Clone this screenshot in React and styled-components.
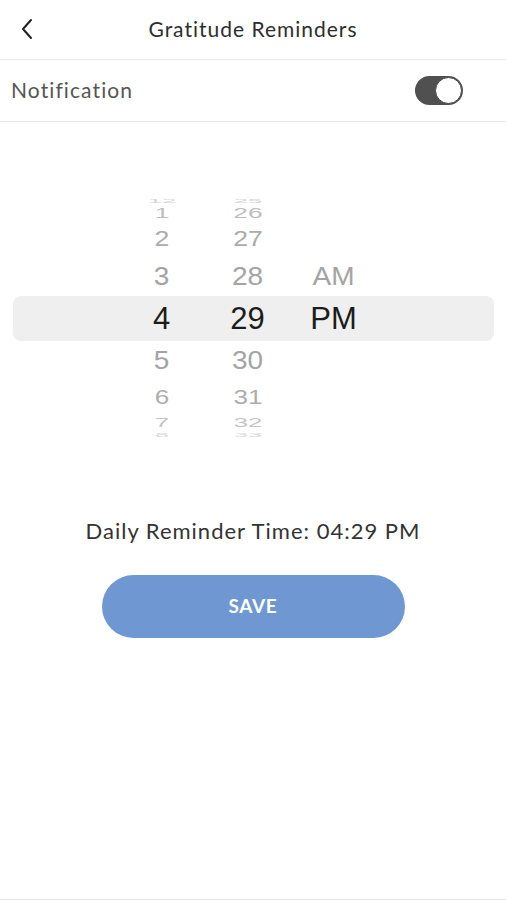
import React from "react"
import styled, { createGlobalStyle } from "styled-components"

const GlobalStyle = createGlobalStyle`
  html, body {
    margin: 0;
    padding: 0;
    background: #fff;
    -webkit-font-smoothing: antialiased;
  }
`

const Screen = styled.div`
  display: flex;
  flex-direction: column;
  height: 900px;
  box-sizing: border-box;
  border-bottom: 1px solid #e6e6e6;
  font-family: Lato, "Noto Sans", sans-serif;
`

const Header = styled.header`
  position: relative;
  display: flex;
  align-items: center;
  justify-content: center;
  height: 59px;
  border-bottom: 1px solid #e8e8e8;
`

const BackButton = styled.button`
  position: absolute;
  left: 13px;
  top: 14px;
  display: flex;
  align-items: center;
  justify-content: center;
  width: 28px;
  height: 30px;
  padding: 0;
  border: none;
  background: none;
`

const Title = styled.h1`
  margin: 0 0 2px;
  font-size: 21px;
  font-weight: 400;
  color: #2e2e2e;
  letter-spacing: 1px;
`

const SettingRow = styled.div`
  display: flex;
  align-items: center;
  justify-content: space-between;
  height: 61px;
  padding: 0 43px 0 11px;
  border-bottom: 1px solid #e8e8e8;
`

const SettingLabel = styled.span`
  margin-bottom: 3px;
  font-size: 21px;
  color: #555;
  letter-spacing: 1.1px;
`

const Toggle = styled.div`
  display: flex;
  align-items: center;
  justify-content: ${(p) => (p.$on ? "flex-end" : "flex-start")};
  width: 48px;
  height: 29px;
  box-sizing: border-box;
  padding: 1px;
  border-radius: 15px;
  background: ${(p) => (p.$on ? "#505050" : "#ddd")};
`

const Knob = styled.div`
  width: 27px;
  height: 27px;
  box-sizing: border-box;
  border-radius: 50%;
  background: #fff;
  border: 1.5px solid #444;
`

const Picker = styled.div`
  display: flex;
  flex-direction: column;
  margin: 74px 0 0;
  font-family: "Liberation Sans", Arial, sans-serif;
`

const WheelRow = styled.div`
  display: grid;
  grid-template-columns: 86px 86px 86px;
  grid-template-rows: ${(p) => p.$h}px;
  justify-content: center;
  padding-right: 12px;
  height: ${(p) => p.$h}px;
  margin: 0 12px 0 13px;
  border-radius: 8px;
  background: ${(p) => (p.$selected ? "#efefef" : "transparent")};
`

const Cell = styled.div`
  display: flex;
  align-items: center;
  justify-content: center;
  height: 100%;
  min-height: 0;
  font-size: ${(p) => (p.$selected ? 31 : 28)}px;
  color: ${(p) => p.$color};
  transform: scale(${(p) => p.$sx}, ${(p) => p.$sy});
  line-height: 1;
  white-space: nowrap;
`

const Summary = styled.p`
  margin: 77px 0 0;
  text-align: center;
  font-size: 22px;
  line-height: 30px;
  color: #333;
  letter-spacing: 1px;
`

const SaveButton = styled.button`
  align-self: center;
  width: 303px;
  height: 63px;
  margin-top: 29px;
  padding-bottom: 3px;
  border: none;
  border-radius: 32px;
  background: #6f98d3;
  color: #fff;
  font-family: Lato, "Noto Sans", sans-serif;
  font-size: 19px;
  font-weight: 700;
  letter-spacing: 0.6px;
`

const rows = [
  { h: 10, cells: ["12", "25", ""], sx: 0.92, sy: 0.2, color: "#d4d4d4" },
  { h: 15, cells: ["1", "26", ""], sx: 0.94, sy: 0.5, color: "#bdbdbd" },
  { h: 36, cells: ["2", "27", ""], sx: 0.95, sy: 0.8, color: "#ababab" },
  { h: 39, cells: ["3", "28", "AM"], sx: 1, sy: 0.93, color: "#a4a4a4" },
  { h: 45, cells: ["4", "29", "PM"], sx: 1, sy: 1, color: "#1c1c1c", selected: true },
  { h: 39, cells: ["5", "30", ""], sx: 1, sy: 0.9, color: "#a4a4a4" },
  { h: 34, cells: ["6", "31", ""], sx: 0.93, sy: 0.75, color: "#adadad" },
  { h: 18, cells: ["7", "32", ""], sx: 0.92, sy: 0.48, color: "#c4c4c4" },
  { h: 7, cells: ["8", "33", ""], sx: 0.9, sy: 0.18, color: "#dadada" },
]

export default function App() {
  return (
    <>
      <GlobalStyle />
      <Screen>
        <Header>
          <BackButton aria-label="Back">
            <svg width="14" height="22" viewBox="0 0 14 22" fill="none">
              <path
                d="M11 2 L3 11 L11 20"
                stroke="#222"
                strokeWidth="2"
                strokeLinecap="round"
                strokeLinejoin="round"
              />
            </svg>
          </BackButton>
          <Title>Gratitude Reminders</Title>
        </Header>
        <SettingRow>
          <SettingLabel>Notification</SettingLabel>
          <Toggle $on>
            <Knob />
          </Toggle>
        </SettingRow>
        <Picker>
          {rows.map((r, i) => (
            <WheelRow key={i} $h={r.h} $selected={r.selected}>
              {r.cells.map((c, j) => (
                <Cell
                  key={j}
                  $selected={r.selected}
                  $color={r.color}
                  $sx={r.sx}
                  $sy={r.sy}
                >
                  {c}
                </Cell>
              ))}
            </WheelRow>
          ))}
        </Picker>
        <Summary>Daily Reminder Time: 04:29 PM</Summary>
        <SaveButton>SAVE</SaveButton>
      </Screen>
    </>
  )
}
